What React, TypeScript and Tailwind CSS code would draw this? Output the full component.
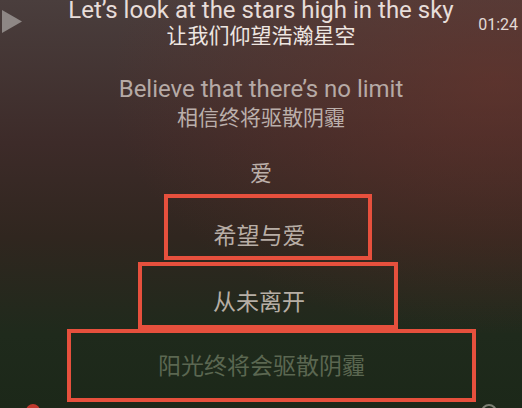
import React from "react";

const sans = "font-['Roboto','Noto_Sans_CJK_SC',sans-serif]";

function PlayIcon() {
  return (
    <svg width="22" height="24" viewBox="0 0 22 24" className="mt-[10px] ml-[1px]">
      <path d="M1 0 L21 11.5 L1 23 Z" fill="#8e8785" />
    </svg>
  );
}

function Box({
  className,
  textClass,
  children,
}: {
  className: string;
  textClass: string;
  children: React.ReactNode;
}) {
  return (
    <div className={`border-[4px] border-[#e6503d] ${className}`}>
      <div className={`text-center text-[23px] leading-[24px] ${textClass}`}>{children}</div>
    </div>
  );
}

export default function App() {
  return (
    <div
      className={`relative w-[522px] h-[408px] overflow-hidden ${sans} bg-[radial-gradient(ellipse_at_95%_20%,rgba(112,52,42,0.55),transparent_55%),linear-gradient(to_bottom,#4a3e3d_0%,#3d2b29_35%,#30261f_58%,#1f2a1c_82%,#1c2819_100%)]`}
    >
      <div className="grid grid-cols-[60px_1fr_60px]">
        <div>
          <PlayIcon />
        </div>
        <div className="flex flex-col items-center">
          <div className="mt-[-2px] text-[24px] leading-[24px] text-[#e7ddd9] whitespace-nowrap">
            Let’s look at the stars high in the sky
          </div>
          <div className="mt-[2px] text-[21px] leading-[24px] text-[#eee6e1]">让我们仰望浩瀚星空</div>
          <div className="mt-[29px] text-[24px] leading-[24px] text-[#b6aaa6] whitespace-nowrap">
            Believe that there’s no limit
          </div>
          <div className="mt-[5px] text-[21px] leading-[24px] text-[#bbafab]">相信终将驱散阴霾</div>
          <div className="mt-[32px] text-[22px] leading-[24px] text-[#bcb0aa]">爱</div>
        </div>
        <div className="flex justify-end pr-[4px]">
          <div className="mt-[15px] text-[16px] leading-[20px] text-[#e2dad6]">01:24</div>
        </div>
      </div>

      <Box className="mt-[8px] ml-[164px] w-[208px] h-[66px] pt-[27px] pr-[17px]" textClass="text-[#b8aea6]">
        希望与爱
      </Box>
      <Box className="mt-[2px] ml-[138px] w-[260px] h-[67px] pt-[25px] pr-[18px]" textClass="text-[#b6aea5]">
        从未离开
      </Box>
      <Box className="ml-[67px] w-[409px] h-[73px] pt-[22px] pr-[20px]" textClass="text-[#5b6751]">
        阳光终将会驱散阴霾
      </Box>

      <div className="flex justify-between px-[26px] mt-[2px]">
        <div className="w-[14px] h-[14px] rounded-full bg-[#c0392e]" />
        <div className="mr-[-1px] w-[16px] h-[16px] rounded-full border-[2px] border-[#7d8074]" />
      </div>
    </div>
  );
}
